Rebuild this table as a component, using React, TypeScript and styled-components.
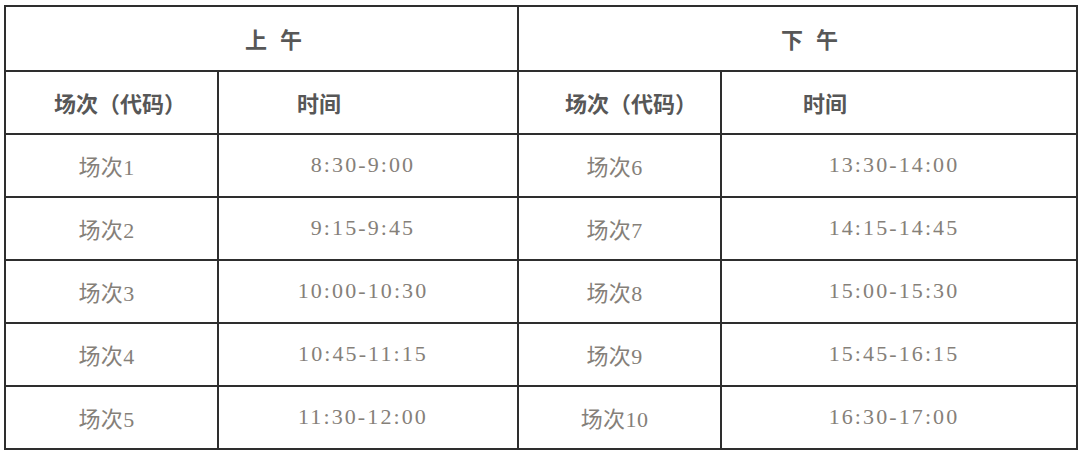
import React from "react";
import styled, { createGlobalStyle } from "styled-components";

const Global = createGlobalStyle`
  html, body { margin: 0; padding: 0; background: #fff; }
  body { width: 1080px; height: 453px; overflow: hidden; }
`;

const Wrap = styled.div`
  padding: 5px 4px 0 4px;
`;

const Table = styled.table`
  width: 1072px;
  border-collapse: collapse;
  table-layout: fixed;
`;

const Cell = styled.td<{ $align?: "left" | "center"; $pl?: number; $pr?: number; $h?: number }>`
  border: 2px solid #2e2e2e;
  height: ${(p) => p.$h ?? 63.1}px;
  padding: 0 ${(p) => p.$pr ?? 0}px 0 ${(p) => p.$pl ?? 0}px;
  text-align: ${(p) => p.$align ?? "center"};
  vertical-align: middle;
  box-sizing: border-box;
`;

const Head = styled.span<{ $gap?: number }>`
  font-family: "Noto Sans CJK SC", "Noto Sans", sans-serif;
  font-weight: 700;
  font-size: 22px;
  color: #575757;
  letter-spacing: ${(p) => p.$gap ?? 0}px;
  white-space: pre;
`;

const Data = styled.span<{ $time?: boolean }>`
  font-family: "Liberation Serif", "Noto Sans CJK SC", serif;
  font-size: 22px;
  color: #858079;
  letter-spacing: ${(p) => (p.$time ? 2.1 : 0.4)}px;
  white-space: pre;
`;

const am = [
  ["场次1", "8:30-9:00"],
  ["场次2", "9:15-9:45"],
  ["场次3", "10:00-10:30"],
  ["场次4", "10:45-11:15"],
  ["场次5", "11:30-12:00"],
];
const pm = [
  ["场次6", "13:30-14:00"],
  ["场次7", "14:15-14:45"],
  ["场次8", "15:00-15:30"],
  ["场次9", "15:45-16:15"],
  ["场次10", "16:30-17:00"],
];

export default function App() {
  return (
    <>
      <Global />
      <Wrap>
        <Table>
          <colgroup>
            <col style={{ width: 213 }} />
            <col style={{ width: 300 }} />
            <col style={{ width: 203 }} />
            <col style={{ width: 356 }} />
          </colgroup>
          <tbody>
            <tr>
              <Cell colSpan={2} $h={64.5} $pl={28}>
                <Head $gap={4}>上 午</Head>
              </Cell>
              <Cell colSpan={2} $h={64.5} $pl={28}>
                <Head $gap={4}>下 午</Head>
              </Cell>
            </tr>
            <tr>
              <Cell $align="left" $pl={48} $h={63}>
                <Head>场次（代码）</Head>
              </Cell>
              <Cell $align="left" $pl={78} $h={63}>
                <Head>时间</Head>
              </Cell>
              <Cell $align="left" $pl={46} $h={63}>
                <Head>场次（代码）</Head>
              </Cell>
              <Cell $align="left" $pl={81} $h={63}>
                <Head>时间</Head>
              </Cell>
            </tr>
            {am.map((r, i) => (
              <tr key={i}>
                <Cell $pr={10}>
                  <Data>{r[0]}</Data>
                </Cell>
                <Cell $pr={10}>
                  <Data $time>{r[1]}</Data>
                </Cell>
                <Cell $pr={10}>
                  <Data>{pm[i][0]}</Data>
                </Cell>
                <Cell $pr={10}>
                  <Data $time>{pm[i][1]}</Data>
                </Cell>
              </tr>
            ))}
          </tbody>
        </Table>
      </Wrap>
    </>
  );
}
